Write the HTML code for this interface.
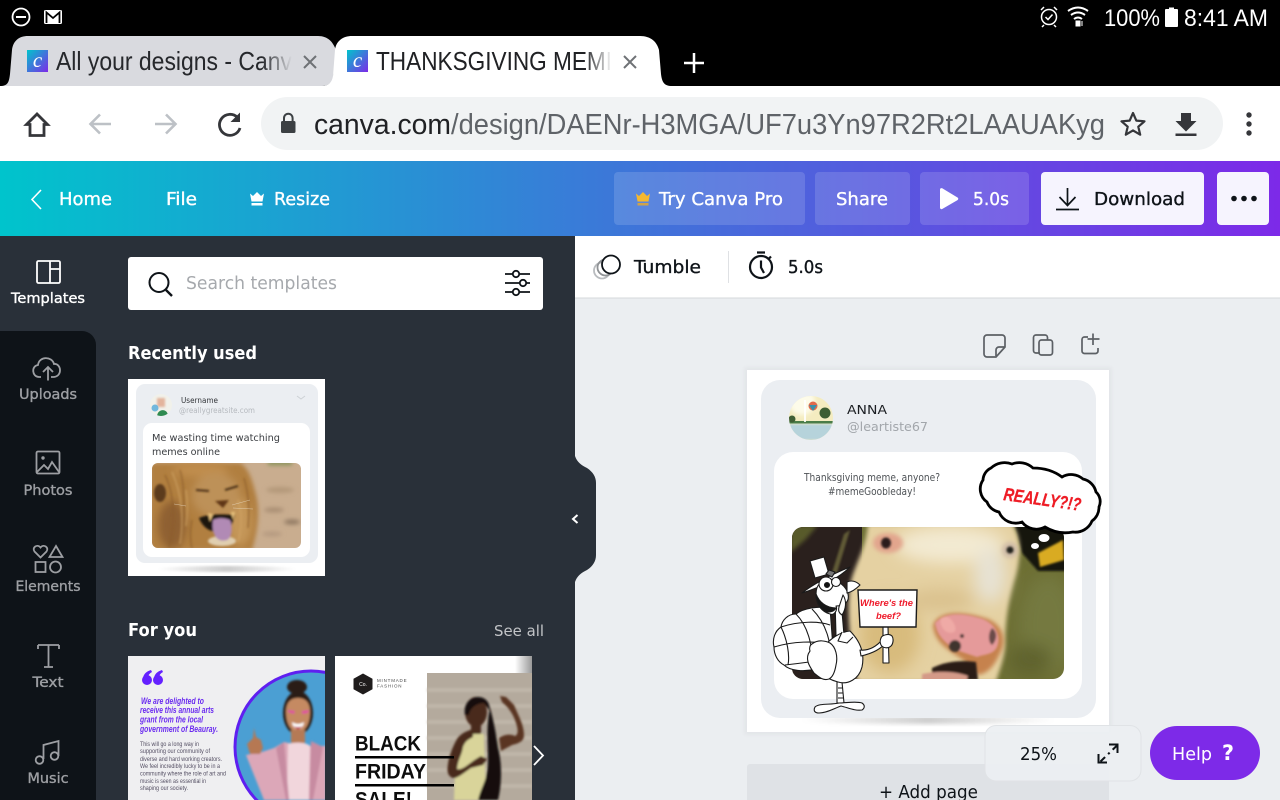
<!DOCTYPE html>
<html><head><meta charset="utf-8"><title>Canva</title>
<style>
html,body{margin:0;padding:0;background:#000;width:1280px;height:800px;overflow:hidden}
svg{display:block;position:absolute;left:0;top:0}
text{font-family:"Liberation Sans",sans-serif}
.u,.u text{font-family:"DejaVu Sans","Liberation Sans",sans-serif}
.m{stroke-width:.35px;paint-order:stroke}
</style></head><body>
<svg width="1280" height="800" viewBox="0 0 1280 800" xmlns="http://www.w3.org/2000/svg">
<defs>
<linearGradient id="bar" x1="0" x2="1" y1="0" y2="0"><stop offset="0" stop-color="#00c4cc"/><stop offset=".5" stop-color="#3f74d9"/><stop offset="1" stop-color="#7d2ae8"/></linearGradient>
<linearGradient id="fav" x1="0" x2="1" y1="0" y2="1"><stop offset="0" stop-color="#00c4cc"/><stop offset="1" stop-color="#7d2ae8"/></linearGradient>
<linearGradient id="fade1" gradientUnits="userSpaceOnUse" x1="262" x2="292" y1="0" y2="0"><stop offset="0" stop-color="#26282c"/><stop offset="1" stop-color="#d9dadf"/></linearGradient>
<linearGradient id="fade2" gradientUnits="userSpaceOnUse" x1="585" x2="612" y1="0" y2="0"><stop offset="0" stop-color="#202124"/><stop offset="1" stop-color="#ffffff"/></linearGradient>
<linearGradient id="fadeR" x1="0" x2="1" y1="0" y2="0"><stop offset="0" stop-color="#fff"/><stop offset="1" stop-color="#999"/></linearGradient>
<linearGradient id="sh" x1="0" x2="1"><stop offset="0" stop-color="#000" stop-opacity="0"/><stop offset=".5" stop-color="#000" stop-opacity=".2"/><stop offset="1" stop-color="#000" stop-opacity="0"/></linearGradient>
<filter id="b1" x="-20%" y="-20%" width="140%" height="140%"><feGaussianBlur stdDeviation="1"/></filter>
<filter id="b2" x="-30%" y="-30%" width="160%" height="160%"><feGaussianBlur stdDeviation="2"/></filter>
<filter id="b4" x="-40%" y="-40%" width="180%" height="180%"><feGaussianBlur stdDeviation="4"/></filter>
<filter id="b8" x="-50%" y="-50%" width="200%" height="200%"><feGaussianBlur stdDeviation="8"/></filter>
<filter id="bt" x="-5%" y="-20%" width="110%" height="140%"><feGaussianBlur stdDeviation=".35"/></filter>
<clipPath id="cowc"><rect x="792" y="527" width="272" height="152" rx="11"/></clipPath>
<clipPath id="lionc"><rect x="152" y="463" width="149" height="85" rx="6"/></clipPath>
<clipPath id="th1"><rect x="128" y="656" width="197" height="144"/></clipPath>
<clipPath id="th2"><rect x="335" y="656" width="197" height="144"/></clipPath>
<clipPath id="circ"><circle cx="311" cy="747" r="76"/></clipPath>
<clipPath id="ava"><circle cx="811" cy="418" r="22"/></clipPath>
<clipPath id="ava2"><circle cx="161" cy="405" r="11"/></clipPath>
</defs>

<!-- chrome -->
<rect width="1280" height="800" fill="#000"/>
<circle cx="21" cy="17" r="8.500" fill="none" stroke="#fff" stroke-width="1.800"/><rect x="16" y="16" width="10" height="2" fill="#fff"/>
<rect x="44" y="10" width="18" height="14" rx="1.500" fill="#fff"/><path d="M46.500 23V12.500L53 18l6.500-5.500V23" fill="none" stroke="#000" stroke-width="1.800"/>
<g fill="none" stroke="#fff" stroke-width="1.500"><circle cx="1049" cy="17" r="7.500"/><path d="M1045.500 17l2.500 2.500 4.500-5M1041 10l3-3M1057 10l-3-3M1044 25l-2 2M1054 25l2 2"/>
<path d="M1068 11q10-7 20 0M1071 15q7-5 14 0M1074 19q4-3 8 0" stroke-width="2"/></g>
<path d="M1076 21h4v5h-4zM1082 21v5" stroke="#fff" fill="#fff" stroke-width="1"/>
<text x="1104" y="26" font-size="24" fill="#fff" textLength="56" lengthAdjust="spacingAndGlyphs">100%</text>
<path d="M1166 9h3V7.500h5V9h3a1 1 0 0 1 1 1v16a1 1 0 0 1-1 1h-11a1 1 0 0 1-1-1V10a1 1 0 0 1 1-1z" fill="#fff"/>
<text x="1184" y="26" font-size="24" fill="#fff" textLength="84" lengthAdjust="spacingAndGlyphs">8:41 AM</text>

<path d="M0 86C8 86 9 82 10 74L12 50C13 41 19 36 28 36H318C328 36 333 42 336 50L333 78C332 83 328 86 322 86Z" fill="#d9dadf"/>
<path d="M322 86C329 86 332 82 333 76L335 50C336 41 343 36 352 36H640C651 36 657 42 659 50L661 74C662 82 664 86 672 86Z" fill="#fff"/>
<rect x="27" y="50" width="21" height="22" fill="url(#fav)"/>
<text x="37.500" y="67" font-size="21" font-style="italic" fill="#fff" text-anchor="middle" style="font-family:'Liberation Serif',serif">c</text>
<text x="56" y="70" font-size="26" fill="url(#fade1)" textLength="236" lengthAdjust="spacingAndGlyphs">All your designs - Canv</text>
<path d="M304 56l12 12M316 56l-12 12" stroke="#6f7276" stroke-width="2"/>
<rect x="347" y="50" width="21" height="22" fill="url(#fav)"/>
<text x="357.500" y="67" font-size="21" font-style="italic" fill="#fff" text-anchor="middle" style="font-family:'Liberation Serif',serif">c</text>
<text x="376" y="70" font-size="26" fill="url(#fade2)" textLength="236" lengthAdjust="spacingAndGlyphs">THANKSGIVING MEMI</text>
<path d="M624 56l12 12M636 56l-12 12" stroke="#6f7276" stroke-width="2"/>
<path d="M694 53v20M684 63h20" stroke="#fff" stroke-width="2.500"/>

<rect x="0" y="86" width="1280" height="75" fill="#fff"/>
<path d="M37 114L26.500 124.500H30V135.500H44V124.500H47.500Z" fill="none" stroke="#35363a" stroke-width="2.800"/>
<g fill="none" stroke="#bdc1c6" stroke-width="2.600"><path d="M111 124H91M100 114.500L90.500 124l9.500 9.500"/><path d="M155 124h20M166 114.500l9.500 9.500-9.500 9.500"/></g>
<path d="M237.500 117.500A10.500 10.500 0 1 0 240 128" fill="none" stroke="#35363a" stroke-width="2.800"/><path d="M240 112.500V122H230.500Z" fill="#35363a"/>
<rect x="261" y="97" width="962" height="53" rx="26.500" fill="#f1f3f4"/>
<rect x="281" y="121" width="14.500" height="12" rx="1.500" fill="#3c4043"/><path d="M284 122v-4a4.300 4.300 0 0 1 8.600 0v4" fill="none" stroke="#3c4043" stroke-width="2"/>
<text x="314" y="134" font-size="29" fill="#202124" textLength="137" lengthAdjust="spacingAndGlyphs">canva.com</text>
<text x="451" y="134" font-size="29" fill="#5f6368" textLength="654" lengthAdjust="spacingAndGlyphs">/design/DAENr-H3MGA/UF7u3Yn97R2Rt2LAAUAKyg</text>
<path d="M1133 113l3.300 7.600 8.200.7-6.200 5.400 1.900 8-7.200-4.300-7.200 4.300 1.900-8-6.200-5.400 8.200-.7z" fill="none" stroke="#35363a" stroke-width="2.200" stroke-linejoin="round"/>
<path d="M1181 113h10v8h5.500l-10.500 10.500L1175.500 121h5.500zM1175.500 133.500h21v2.500h-21z" fill="#35363a"/>
<g fill="#35363a"><circle cx="1249" cy="115" r="2.700"/><circle cx="1249" cy="124" r="2.700"/><circle cx="1249" cy="133" r="2.700"/></g>

<!-- top bar -->
<rect x="0" y="161" width="1280" height="75" fill="url(#bar)"/>
<path d="M41 190L32 199.500l9 9.500" fill="none" stroke="#fff" stroke-width="1.600"/>
<g class="u m" font-size="18" fill="#fff" stroke="#fff">
<text x="59" y="205" textLength="53" lengthAdjust="spacingAndGlyphs">Home</text>
<text x="166" y="205" textLength="31" lengthAdjust="spacingAndGlyphs">File</text>
<text x="274" y="205" textLength="56" lengthAdjust="spacingAndGlyphs">Resize</text>
</g>
<path d="M250 193.500l3 2.500 4-4 4 4 3-2.500-1.500 8h-11zM251.500 203h11v2.500h-11z" fill="#fff"/>
<g fill="#fff" fill-opacity=".14"><rect x="614" y="172" width="191" height="53" rx="4"/><rect x="815" y="172" width="95" height="53" rx="4"/><rect x="920" y="172" width="109" height="53" rx="4"/></g>
<path d="M636 193.500l3 2.500 4-4 4 4 3-2.500-1.500 8h-11z" fill="#f5b82e"/><path d="M637.500 203h11v2.500h-11z" fill="#cfa34a"/>
<g class="u m" font-size="18" fill="#fff" stroke="#fff">
<text x="659" y="205" textLength="124" lengthAdjust="spacingAndGlyphs">Try Canva Pro</text>
<text x="836" y="205" textLength="52" lengthAdjust="spacingAndGlyphs">Share</text>
<text x="973" y="205" textLength="36" lengthAdjust="spacingAndGlyphs">5.0s</text>
</g>
<path d="M940 189.500a1.500 1.500 0 0 1 2.200-1.200L957.500 197.500a1.500 1.500 0 0 1 0 2.600L942.200 209a1.500 1.500 0 0 1-2.200-1.200z" fill="#fff"/>
<rect x="1041" y="172" width="163" height="53" rx="4" fill="#f6f4fe"/>
<rect x="1217" y="172" width="52" height="53" rx="4" fill="#f6f4fe"/>
<path d="M1067.500 188v17M1059.500 197l8 8.500 8-8.500M1056 209.500h23" fill="none" stroke="#0e1318" stroke-width="1.700"/>
<text x="1094" y="205" font-size="18" fill="#0e1318" stroke="#0e1318" class="u m" textLength="91" lengthAdjust="spacingAndGlyphs">Download</text>
<g fill="#0e1318"><circle cx="1234" cy="198.500" r="2.800"/><circle cx="1244" cy="198.500" r="2.800"/><circle cx="1254" cy="198.500" r="2.800"/></g>

<!-- left panel -->
<rect x="0" y="236" width="575" height="564" fill="#293039"/>
<path d="M0 331H82A14 14 0 0 1 96 345V800H0Z" fill="#0e1318"/>

<!-- sidebar -->
<g fill="none" stroke="#fff" stroke-width="1.800"><rect x="37" y="261" width="23" height="22" rx="1.500"/><path d="M50 261v22M50 269h10"/></g>
<text x="48" y="303" font-size="14" fill="#fff" stroke="#fff" class="u m" text-anchor="middle" textLength="74" lengthAdjust="spacingAndGlyphs">Templates</text>
<g fill="none" stroke="#9d9fa3" stroke-width="1.800">
<path d="M41 377h-2c-7 0-8-11-1-12 1-9 14-9 16-1 7-1 9 12 0 13h-3M48 380.500V367M43 372l5-5 5 5"/>
<rect x="36.500" y="451.500" width="23" height="22" rx="1.500"/><circle cx="43" cy="458" r="1.700" fill="#9d9fa3" stroke="none"/><path d="M37 472l7-7 4 4 4-7 7 10"/>
<path d="M40.500 557.500l-6-6c-3-4 3-8 6-4 3-4 9 0 6 4zM56 546l6.500 11h-13z"/><rect x="35.500" y="562" width="10" height="10"/><circle cx="55.500" cy="567" r="5.500"/>
<path d="M38 645h21M48.500 645v22M44 667h9M38 645v4M59 645v4"/>
<path d="M43.500 759v-14l15-4v15"/><circle cx="39.500" cy="760" r="3.800"/><circle cx="54.500" cy="756" r="3.800"/>
</g>
<g class="u m" font-size="14" fill="#9d9fa3" stroke="#9d9fa3" text-anchor="middle">
<text x="48" y="399" textLength="58" lengthAdjust="spacingAndGlyphs">Uploads</text>
<text x="48" y="495" textLength="49" lengthAdjust="spacingAndGlyphs">Photos</text>
<text x="48" y="591" textLength="65" lengthAdjust="spacingAndGlyphs">Elements</text>
<text x="48" y="687" textLength="31" lengthAdjust="spacingAndGlyphs">Text</text>
<text x="48" y="783" textLength="41" lengthAdjust="spacingAndGlyphs">Music</text>
</g>

<!-- search -->
<rect x="128" y="257" width="415" height="53" rx="3" fill="#fff"/>
<circle cx="159" cy="282.500" r="9.500" fill="none" stroke="#0e1318" stroke-width="2"/><path d="M166 290l6 6" stroke="#0e1318" stroke-width="2.400"/>
<text x="186" y="289" font-size="18" fill="#a6a9ad" class="u" textLength="151" lengthAdjust="spacingAndGlyphs">Search templates</text>
<g fill="none" stroke="#0e1318" stroke-width="1.800"><path d="M505 274h7.500M519 274h11M505 283h15M526 283h4M505 292h7.500M519 292h11"/><circle cx="516" cy="274" r="3.200"/><circle cx="523" cy="283" r="3.200"/><circle cx="516" cy="292" r="3.200"/></g>

<g class="u" font-size="18" font-weight="700" fill="#fff">
<text x="128" y="359" textLength="129" lengthAdjust="spacingAndGlyphs">Recently used</text>
<text x="128" y="636" textLength="69" lengthAdjust="spacingAndGlyphs">For you</text></g>
<text x="494" y="636" font-size="15.500" fill="#c2c4c7" class="u" textLength="50" lengthAdjust="spacingAndGlyphs">See all</text>

<!-- lion thumb -->
<rect x="128" y="379" width="197" height="197" fill="#fff"/>
<ellipse cx="227" cy="569" rx="70" ry="3" fill="url(#sh)" filter="url(#b1)"/>
<rect x="136" y="384" width="182" height="179" rx="9" fill="#ebeef2"/>
<rect x="143" y="423" width="167" height="134" rx="9" fill="#fff"/>
<g clip-path="url(#ava2)"><rect x="150" y="394" width="22" height="22" fill="#f1f1ea"/><rect x="157" y="398" width="8" height="9" fill="#e3b49c" filter="url(#b1)"/><path d="M157 417c0-9 11-9 11-1z" fill="#2f8a50"/><circle cx="155" cy="408" r="3.500" fill="#72b8dc"/></g>
<text x="181" y="403" font-size="7.500" fill="#33363a" class="u" textLength="37" lengthAdjust="spacingAndGlyphs">Username</text>
<text x="179" y="413" font-size="7.500" fill="#b6babf" class="u" textLength="76" lengthAdjust="spacingAndGlyphs">@reallygreatsite.com</text>
<path d="M297 396l4 3 4-3" fill="none" stroke="#cdd1d5" stroke-width="1"/>
<text x="152" y="441" font-size="10" fill="#3a3d41" class="u" textLength="128" lengthAdjust="spacingAndGlyphs">Me wasting time watching</text>
<text x="152" y="455" font-size="10" fill="#3a3d41" class="u" textLength="68" lengthAdjust="spacingAndGlyphs">memes online</text>
<g clip-path="url(#lionc)">
<rect x="152" y="463" width="149" height="85" fill="#c9ad8f"/>
<g filter="url(#b2)">
<ellipse cx="280" cy="490" rx="14" ry="3" fill="#b39879"/><ellipse cx="274" cy="510" rx="10" ry="2.500" fill="#a88d72"/><ellipse cx="292" cy="522" rx="8" ry="2.500" fill="#8e7760"/><ellipse cx="272" cy="534" rx="10" ry="2.500" fill="#b59a80"/>
<rect x="268" y="461" width="24" height="4" fill="#7f8f52"/>
<path d="M150 463h90c8 4 12 16 16 32 4 16 2 34-4 55H150z" fill="#b17f40"/>
</g>
<g filter="url(#b4)">
<ellipse cx="172" cy="525" rx="14" ry="24" fill="#8f6130"/>
<ellipse cx="240" cy="522" rx="12" ry="24" fill="#c49659"/>
<ellipse cx="200" cy="470" rx="28" ry="7" fill="#c08d4d"/>
<ellipse cx="216" cy="495" rx="24" ry="22" fill="#bd9159"/>
</g>
<g filter="url(#b1)" fill="none" stroke-width="1.500">
<path d="M165 475c10 20 10 50 4 72M180 470c6 20 4 50 0 76M192 520c-2 10-2 20 0 28M244 478c4 14 6 28 4 50" stroke="#8c5c28" opacity=".7"/>
<path d="M172 472c10 22 12 48 8 72M186 490c2 14 2 24 0 36M238 500c4 12 4 28 0 42" stroke="#d0a465" opacity=".7"/>
</g>
<g filter="url(#b1)">
<ellipse cx="160" cy="493" rx="6" ry="9" fill="#5b3a1b"/>
<ellipse cx="222" cy="541" rx="14" ry="5" fill="#e0cfb0"/>
<path d="M196 490l13 1M238 486l-13 4" stroke="#4a2f16" stroke-width="2"/>
<path d="M215 501l14-1-6 8z" fill="#5e3619"/>
<path d="M199 518c5 12 14 16 30 14l6-17c-14-1-28-1-36 3z" fill="#1b1410"/>
<path d="M213 520c6-3 12-2 17 0 3 7 2 18-3 20-9 3-16-4-14-20z" fill="#b18ab5"/>
<path d="M208 513l2 9 3-8zM231 512l2 8 2-8z" fill="#e9c37e"/></g>
<path d="M232 505l18-5M233 508l20 1M186 506l-12-2" stroke="#efe6d4" stroke-width=".5" opacity=".7" fill="none"/>
</g>
<!-- For you 1 -->
<g clip-path="url(#th1)">
<rect x="128" y="656" width="197" height="144" fill="#efeff1"/>
<g fill="#6420ff"><circle cx="147" cy="680" r="5"/><circle cx="158" cy="680" r="5"/><path d="M143 678q1-6 8-8l1 2q-4 2-4 6zM154 678q1-6 8-8l1 2q-4 2-4 6z"/></g>
<g filter="url(#bt)">
<g font-size="9" font-style="italic" font-weight="700" fill="#6a2bf0">
<text x="141" y="704" textLength="63" lengthAdjust="spacingAndGlyphs">We are delighted to</text>
<text x="140" y="713" textLength="74" lengthAdjust="spacingAndGlyphs">receive this annual arts</text>
<text x="140" y="722.500" textLength="63" lengthAdjust="spacingAndGlyphs">grant from the local</text>
<text x="140" y="732" textLength="78" lengthAdjust="spacingAndGlyphs">government of Beauray.</text></g>
<g font-size="6.500" fill="#555064">
<text x="140" y="746" textLength="59" lengthAdjust="spacingAndGlyphs">This will go a long way in</text>
<text x="140" y="753" textLength="70" lengthAdjust="spacingAndGlyphs">supporting our community of</text>
<text x="140" y="761" textLength="82" lengthAdjust="spacingAndGlyphs">diverse and hard working creators.</text>
<text x="140" y="768" textLength="80" lengthAdjust="spacingAndGlyphs">We feel incredibly lucky to be in a</text>
<text x="140" y="775.500" textLength="86" lengthAdjust="spacingAndGlyphs">community where the role of art and</text>
<text x="140" y="783" textLength="66" lengthAdjust="spacingAndGlyphs">music is seen as essential in</text>
<text x="140" y="790" textLength="48" lengthAdjust="spacingAndGlyphs">shaping our society.</text></g>
</g>
<circle cx="311" cy="747" r="76" fill="#4b9fd3" stroke="#5f1ff0" stroke-width="3"/>
<g clip-path="url(#circ)">
<g filter="url(#b1)">
<ellipse cx="297" cy="687" rx="10" ry="7" fill="#2a1a16"/>
<ellipse cx="298" cy="713" rx="15" ry="22" fill="#2a1a16"/>
<path d="M286 712c0-10 5-14 12-14s12 4 12 14c0 12-5 20-12 20s-12-8-12-20z" fill="#c58a62"/>
<path d="M288 710l7 1-1 3-6-2zM302 711l7-1-1 3-6 1z" fill="#e04fa0"/>
<path d="M292 722q6 4 12 0-1 7-6 7t-6-7z" fill="#fff"/><path d="M293 726q5 2 10 0l-5 4z" fill="#bc3e50"/>
<rect x="291" y="730" width="14" height="14" fill="#b57a55"/>
<path d="M246 755l16-3 12-4 10-6 18 4 24 0v54h-62z" fill="#dca7b8"/>
<path d="M288 744c6-2 18-2 22 2l-1 54h-22z" fill="#f1d6dc"/>
<path d="M284 742l-8 6 10 52h3zM311 741l12 6-10 53h-4z" fill="#c78ba1"/>
<path d="M254 728l2 9 5 3 2 8-3 6-10 0-3-10 6-6z" fill="#b67853"/>
</g></g>
</g>
<!-- For you 2 -->
<g clip-path="url(#th2)">
<rect x="335" y="656" width="197" height="144" fill="#fff"/>
<rect x="515" y="656" width="17" height="17" fill="url(#fadeR)"/>
<rect x="427" y="673" width="105" height="127" fill="#b4aa9d"/>
<g stroke="#c4bbae" stroke-width="4" opacity=".7" filter="url(#b1)"><path d="M427 690h105M427 706h105M427 722h105M427 738h105M427 754h105M427 770h105M427 786h105"/></g>
<g filter="url(#b1)">
<path d="M456 742c4-6 8-8 14-10l14 2 2 66h-32z" fill="#d9d49a"/>
<path d="M457 739c4-6 10-8 16-10l0 8c-6 3-8 5-10 10-1 8-5 12-6 22 6 2 14-8 24-13l6 3-4 6-12 3c-6 4-14 11-18 10-6-2-6-8-5-14 1-8 5-18 9-25z" fill="#4a2a1b"/>
<ellipse cx="476" cy="712" rx="11" ry="15" fill="#4a2a1b"/>
<path d="M465 715c-2-12 6-18 13-18 8 0 12 6 12 14l-6-8c-6 0-14 4-15 12z" fill="#141010"/>
<rect x="471" y="722" width="10" height="12" fill="#4a2a1b"/>
<path d="M499 738c6-4 12-4 16-2 4-2 3-8 0-16-3-8-8-14-13-18l-2-6 6 1 8 8c4 10 10 20 10 30 0 6-4 8-12 10l-11 6z" fill="#5a3524"/>
<path d="M490 708c4 14 6 26 8 40 4 14 4 36 0 52h-20c4-16 10-20 10-40 0-16-2-34 2-52z" fill="#141110"/>
</g>
<path d="M363 674l9 5v10l-9 5-9-5v-10z" fill="#1f1c1c" stroke="#1f1c1c" stroke-width="1" stroke-linejoin="round"/>
<text x="363" y="686" font-size="5" fill="#fff" text-anchor="middle">Co.</text>
<g font-size="4.500" fill="#4c4c4c" letter-spacing=".8"><text x="377" y="682">MINTMADE</text><text x="377" y="687.500">FASHION</text></g>
<g font-weight="700" fill="#0f0f0f" filter="url(#bt)"><text x="355" y="750.500" font-size="21" textLength="66" lengthAdjust="spacingAndGlyphs">BLACK</text>
<text x="355" y="778.500" font-size="21" textLength="71" lengthAdjust="spacingAndGlyphs">FRIDAY</text>
<text x="355" y="806.500" font-size="21" textLength="57" lengthAdjust="spacingAndGlyphs">SALE!</text></g>
<rect x="355" y="756" width="99" height="2.500" fill="#000"/><rect x="355" y="784" width="99" height="2.500" fill="#000"/>
</g>
<path d="M534 746l9 9.500-9 9.500" fill="none" stroke="#fff" stroke-width="1.800"/>

<!-- right area -->
<rect x="575" y="236" width="705" height="62" fill="#fff"/>
<rect x="575" y="298" width="705" height="502" fill="#ebeef1"/>
<path d="M575 440v16c2 6 6 9 12 12 6 4 9 9 9 15v72c0 6-3 11-9 15-6 3-10 6-12 12v18z" fill="#293039"/>
<path d="M577.500 515l-4.500 4 4.500 4" fill="none" stroke="#fff" stroke-width="2"/>
<rect x="575" y="297.500" width="705" height="1" fill="#d5d8db"/>
<g fill="none" stroke-width="1.800"><circle cx="602" cy="270.500" r="8" stroke="#b9bcbf"/><circle cx="605.500" cy="267.500" r="8" stroke="#8f9295"/><circle cx="611" cy="264.500" r="9" stroke="#0e1318" fill="#fff"/></g>
<text x="634" y="273" font-size="18" fill="#0e1318" stroke="#0e1318" class="u m" textLength="67" lengthAdjust="spacingAndGlyphs">Tumble</text>
<rect x="728" y="251" width="1" height="32" fill="#dfe1e4"/>
<g fill="none" stroke="#0e1318" stroke-width="2.200"><circle cx="761" cy="267" r="11"/><path d="M761 260.500v7l3 5.500M757 252.500h8M771 256.500l-2.500 2.500"/></g>
<text x="788" y="273" font-size="18" fill="#0e1318" stroke="#0e1318" class="u m" textLength="35" lengthAdjust="spacingAndGlyphs">5.0s</text>
<g fill="none" stroke="#5c6065" stroke-width="1.700">
<path d="M1005 347v-9a3 3 0 0 0-3-3h-15a3 3 0 0 0-3 3v16a3 3 0 0 0 3 3h9zM1005 347h-6a3 3 0 0 0-3 3v6"/>
<path d="M1040 353h-4a2.500 2.500 0 0 1-2.500-2.500v-13a2.500 2.500 0 0 1 2.500-2.500h9a2.500 2.500 0 0 1 2.500 2.500v2"/><rect x="1039" y="340" width="13.500" height="15" rx="2.500"/>
<path d="M1088 337h-3.500a2.500 2.500 0 0 0-2.500 2.500V351a2.500 2.500 0 0 0 2.500 2.500h11a2.500 2.500 0 0 0 2.500-2.500v-3M1093 333.500v11.500M1087.500 339h12"/>
</g>

<!-- page -->
<rect x="744" y="367" width="368" height="368" fill="#000" opacity=".03" filter="url(#b2)"/>
<rect x="747" y="370" width="362" height="362" fill="#fff"/>
<ellipse cx="928" cy="720" rx="130" ry="4" fill="url(#sh)" filter="url(#b2)"/>
<rect x="761" y="380" width="335" height="338" rx="19" fill="#ebeef2"/>
<rect x="774" y="452" width="308" height="247" rx="19" fill="#fff"/>
<g clip-path="url(#ava)">
<rect x="789" y="396" width="44" height="44" fill="#f4ecc0"/>
<circle cx="802" cy="402" r="13" fill="#fdfbe9" filter="url(#b2)"/>
<rect x="789" y="424" width="44" height="16" fill="#b6d3db" filter="url(#b1)"/>
<rect x="789" y="421" width="44" height="2.500" fill="#4a7d48"/>
<circle cx="825" cy="413" r="5.500" fill="#3d5e33"/><circle cx="792" cy="419" r="3.500" fill="#405f34"/>
<circle cx="813" cy="406" r="4.500" fill="#e06a4a"/><path d="M809 405h8l-4 6z" fill="#3a8fa8"/>
<rect x="804" y="400" width="2" height="22" fill="#fff" opacity=".85"/>
</g>
<text x="847" y="414" font-size="12.500" fill="#1c1f23" class="u" textLength="40" lengthAdjust="spacingAndGlyphs">ANNA</text>
<text x="847" y="431" font-size="12.500" fill="#a2a6ab" class="u" textLength="81" lengthAdjust="spacingAndGlyphs">@leartiste67</text>
<text x="804" y="481" font-size="10.500" fill="#4f5357" class="u" textLength="136" lengthAdjust="spacingAndGlyphs">Thanksgiving meme, anyone?</text>
<text x="828" y="495" font-size="10.500" fill="#4f5357" class="u" textLength="88" lengthAdjust="spacingAndGlyphs">#memeGoobleday!</text>

<!-- cow -->
<g clip-path="url(#cowc)">
<rect x="792" y="527" width="272" height="152" fill="#6d6f34"/>
<g filter="url(#b8)"><ellipse cx="1048" cy="625" rx="28" ry="50" fill="#75793f"/><ellipse cx="1030" cy="660" rx="22" ry="16" fill="#60642f"/></g>
<path d="M1014 525h52v46h-28l-16-18z" fill="#141410" filter="url(#b1)"/>
<path d="M1038 553l25-13 1 20-24 7z" fill="#d9ab20" filter="url(#b1)"/>
<rect x="792" y="527" width="70" height="152" fill="#2a201d"/>
<path d="M790 525h28l-12 14-16 14z" fill="#585a2a" filter="url(#b2)"/>
<path d="M850 530l-14 46-5 0 13-42z" fill="#6f6a3e" filter="url(#b1)" opacity=".8"/>
<g filter="url(#b2)">
<path d="M868 524H1012C1020 535 1022 552 1016 575C1008 600 1006 620 1005 640C1006 655 1000 668 996 682H857C852 650 846 620 850 585C854 565 866 550 868 524Z" fill="#e5d1a2"/>
</g>
<g filter="url(#b8)">
<ellipse cx="950" cy="545" rx="55" ry="18" fill="#f3ead2"/>
<ellipse cx="990" cy="575" rx="16" ry="28" fill="#e7e2d3"/>
<ellipse cx="890" cy="635" rx="30" ry="38" fill="#d8bb7d"/>
<ellipse cx="940" cy="600" rx="34" ry="10" fill="#d9c08c"/>
</g>
<g filter="url(#b2)">
<ellipse cx="888" cy="543" rx="15" ry="10" fill="#e2a58d"/>
<ellipse cx="1010" cy="550" rx="8" ry="8" fill="#cfbca8"/>
<path d="M933 625c6-15 30-14 55-6 14 6 18 18 14 30-6 14-12 24-24 26l-16-16c-12-8-28-16-29-34z" fill="#c6824d"/>
</g>
<g filter="url(#b1)">
<path d="M935 623c10-12 30-10 48-4 14 6 18 18 14 28-4 8-12 7-20 10l-18-6c-12-6-22-14-24-28z" fill="#e59a9a"/>
<path d="M941 618c6-3 11 0 14 8 2 6-2 8-8 6-4-2-8-8-6-14z" fill="#efaaa6"/>
<path d="M992 628c6 4 5 12 0 17-4-3-4-12 0-17z" fill="#6a4c48"/>
<ellipse cx="955" cy="646" rx="6" ry="6" fill="#41352f"/><circle cx="962" cy="636" r="2" fill="#41352f"/>
<ellipse cx="886" cy="543" rx="5" ry="5.500" fill="#2a1b1c"/>
<circle cx="1010" cy="550" r="3.500" fill="#22201c"/>
<path d="M932 668c14-7 30-8 44-6l2 18h-46z" fill="#2b1e18"/>
<path d="M922 674c18-4 36-2 46 2l-2 6h-44z" fill="#d49a88"/>
</g>
</g>

<!-- turkey -->
<g stroke="#1a1a1a" fill="#fff" stroke-width="1.100" stroke-linejoin="round">
<path d="M830 608c-12-2-26 0-34 6-8 0-14 6-15 13-6 4-9 12-7 20 0 8 4 15 10 18 6 6 20 7 32 4 8 1 14-2 18-8z"/>
<g fill="none"><path d="M781 627c18-6 38-6 49-2M774 647c20-6 40-6 55-3M785 665c18-2 32-4 44-6M796 614c12 12 18 34 16 56M812 609c14 14 20 34 18 52M781 627c6 12 9 28 7 38"/></g>
<path d="M835 600l6 0 3 35-8 1z"/>
<path d="M837 682l5 0 2 21-7 0z"/><path d="M838 688h5M838 693h5M838 698h5" fill="none"/>
<path d="M839 703c-8 2-20 0-24 4-2 4 0 6 4 6 8 0 16-5 22-7 8 2 14 5 21 4 3-2 3-5 0-7-6-2-16 0-23 0z"/>
<path d="M850 631c10 10 15 22 12 36-3 12-14 18-24 15-8-2-14-6-20-10-4-4-6-10-8-16l16-12c6-6 14-12 24-13z"/>
<path d="M842 632l-4 9 9 2 6-6" />
<path d="M812 644c6-5 14-3 18-1 6 4 8 14 6 22-1 6-3 12-7 14-6 2-10-2-15-6-4-6-10-14-4-22-1-3 0-6 2-7z"/>
<path d="M860 650c8 1 16-3 23-11l3 4c-6 6-12 10-25 13z"/>
<path d="M883 627h5l1 36h-6z"/>
<path d="M881 638c1-3 8-5 11-2 2 3 1 8-1 10-3 3-8 2-10-1-1-2-1-5 0-7z"/>
<path d="M810 561l14-4 5 17-14 4z"/>
<path d="M802 593c10-8 28-18 48-26-10 10-28 20-48 26z"/>
<path d="M816 594c0-10 6-14 14-14 8 0 16 6 18 14 2 8-4 12-12 12 2 4-2 10-6 8-8-2-14-10-14-20z"/>
<path d="M847 582c4-2 9-1 13 3-4 4-8 7-13 8z"/>
<path d="M843 595c4 6 3 14-1 20-3-2-4-4-3-8z"/>
<path d="M816 594c3 8 10 14 20 14-2 4-8 5-12 3-5-3-8-10-8-17z" fill="#161616"/>
<circle cx="826" cy="584" r="7"/><circle cx="827" cy="585" r="2.500" fill="#111"/>
<circle cx="836" cy="582" r="4.500"/>
<path d="M826 574l6 3 3-5-6-2z" fill="#777"/>
</g>
<path d="M858 590h59l-1 37h-56z" fill="#fff" stroke="#1b1b1b" stroke-width="1.400"/>
<text x="860" y="606" font-size="9.500" font-weight="700" font-style="italic" fill="#ef1c2c" textLength="53" lengthAdjust="spacingAndGlyphs">Where's the</text>
<text x="876" y="619" font-size="9.500" font-weight="700" font-style="italic" fill="#ef1c2c" textLength="25" lengthAdjust="spacingAndGlyphs">beef?</text>

<!-- cloud -->
<path d="M983 480A14 14 0 0 1 991 468A20 20 0 0 1 1012 464A20 20 0 0 1 1033 468Q1050 468 1062 477A18 18 0 0 1 1083 479A17 17 0 0 1 1096 492A13 13 0 0 1 1099 507A17 17 0 0 1 1092 521A18 18 0 0 1 1073 532Q1058 535 1045 527A18 18 0 0 1 1022 522A18 18 0 0 1 999 512A16 16 0 0 1 987 502A16 16 0 0 1 983 480Z" fill="#fff" stroke="#000" stroke-width="2.800"/>
<ellipse cx="1044" cy="538" rx="5.500" ry="4" fill="#fff"/><ellipse cx="1035" cy="546" rx="4" ry="3" fill="#fff"/>
<text transform="translate(1003 500) rotate(8)" font-size="18" font-weight="700" font-style="italic" fill="#ee1c25" stroke="#ee1c25" stroke-width=".3" textLength="78" lengthAdjust="spacingAndGlyphs">REALLY?!?</text>

<!-- add page -->
<path d="M747 800v-33a3 3 0 0 1 3-3h356a3 3 0 0 1 3 3v33z" fill="#dfe2e6"/>
<text x="879" y="798" font-size="18" fill="#0e1318" class="u" textLength="99" lengthAdjust="spacingAndGlyphs">+ Add page</text>

<!-- zoom + help -->
<rect x="985" y="725.500" width="156" height="55.500" rx="11" fill="#eceff2" fill-opacity=".93" stroke="#e0e3e6"/>
<text x="1020" y="760" font-size="18" fill="#0e1318" class="u" textLength="37" lengthAdjust="spacingAndGlyphs">25%</text>
<path d="M1100.500 761.500L1117 745.500M1109 744.500h8.500v8.500M1098.500 754v8.500h8.500" fill="none" stroke="#0e1318" stroke-width="2"/>
<path d="M1105 757l3-3M1113 750l-3 3" stroke="#eceff2" stroke-width="5"/>
<rect x="1150" y="726" width="110" height="54" rx="27" fill="#7d2ae8"/>
<text x="1172" y="760" font-size="18" fill="#fff" class="u" textLength="40" lengthAdjust="spacingAndGlyphs">Help</text>
<text x="1222" y="760" font-size="21" font-weight="700" fill="#fff" class="u" textLength="12" lengthAdjust="spacingAndGlyphs">?</text>
</svg>
</body></html>
